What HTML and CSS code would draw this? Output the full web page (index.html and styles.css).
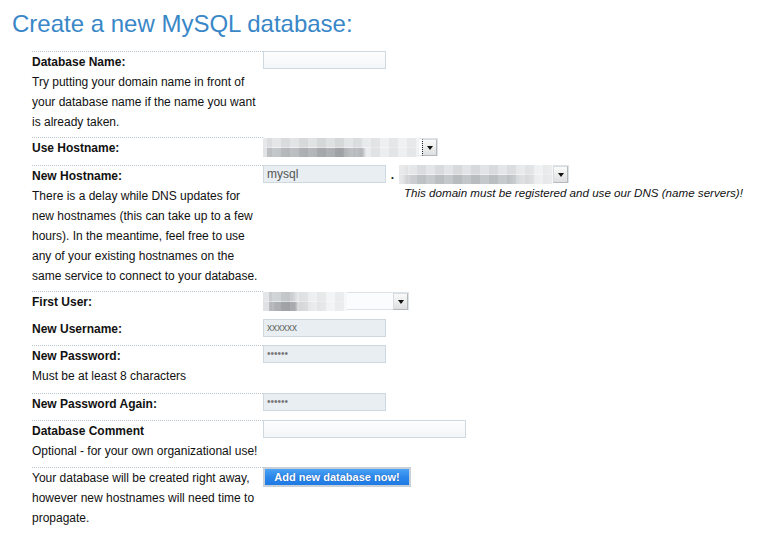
FILE: index.html
```html
<!DOCTYPE html>
<html>
<head>
<meta charset="utf-8">
<link rel="stylesheet" href="styles.css">
</head>
<body>
<h1 class="title">Create a new MySQL database:</h1>
<div class="form">
  <div class="row r-tight">
    <div class="lbl"><b>Database Name:</b><br>Try putting your domain name in front of your database name if the name you want is already taken.</div>
    <div class="fld"><div class="inp w123"></div></div>
  </div>
  <div class="row r-loose">
    <div class="lbl"><b>Use Hostname:</b></div>
    <div class="fld">
      <div class="sel sel-host">
        <div class="mos mos-a"></div>
        <div class="arr focus"><span class="tri"></span></div>
      </div>
    </div>
  </div>
  <div class="row r-tight">
    <div class="lbl"><b>New Hostname:</b><br>There is a delay while DNS updates for new hostnames (this can take up to a few hours). In the meantime, feel free to use any of your existing hostnames on the same service to connect to your database.</div>
    <div class="fld">
      <div class="hostline">
        <div class="inp filled w123">mysql</div>
        <span class="dot">.</span>
        <div class="sel sel-dom">
          <div class="mos mos-b"></div>
          <div class="arr"><span class="tri"></span></div>
        </div>
      </div>
      <div class="note">This domain must be registered and use our DNS (name servers)!</div>
    </div>
  </div>
  <div class="row">
    <div class="lbl"><b>First User:</b></div>
    <div class="fld">
      <div class="sel sel-user">
        <div class="mos mos-c"></div>
        <div class="arr"><span class="tri"></span></div>
      </div>
    </div>
  </div>
  <div class="row nob">
    <div class="lbl"><b>New Username:</b></div>
    <div class="fld"><div class="inp filled w123 small">xxxxxx</div></div>
  </div>
  <div class="row r-loose">
    <div class="lbl"><b>New Password:</b><br>Must be at least 8 characters</div>
    <div class="fld"><div class="inp filled w123 pw">••••••</div></div>
  </div>
  <div class="row">
    <div class="lbl"><b>New Password Again:</b></div>
    <div class="fld"><div class="inp filled w123 pw">••••••</div></div>
  </div>
  <div class="row">
    <div class="lbl"><b>Database Comment</b><br>Optional - for your own organizational use!</div>
    <div class="fld"><div class="inp w203"></div></div>
  </div>
  <div class="row">
    <div class="lbl">Your database will be created right away, however new hostnames will need time to propagate.</div>
    <div class="fld"><div class="btn">Add new database now!</div></div>
  </div>
</div>
</body>
</html>
```
FILE: styles.css
```css
html, body {
  margin: 0;
  padding: 0;
  background: #fff;
}
body {
  padding: 0 12px;
  font-family: "Liberation Sans", Arial, sans-serif;
  font-size: 12px;
  line-height: 20px;
  color: #111;
}
.title {
  margin: 9px 0 12px;
  font-size: 24px;
  line-height: 30px;
  font-weight: normal;
  color: #3a87c8;
}
.form {
  margin-left: 20px;
}
.row {
  display: grid;
  grid-template-columns: 231px 1fr;
}
.lbl {
  border-top: 1px dotted #bcc6ce;
  padding-bottom: 6px;
}
.r-tight .lbl { padding-bottom: 5px; }
.r-loose .lbl { padding-bottom: 7px; }
.nob .lbl { border-top-color: transparent; }
.lbl b { font-weight: bold; }
.fld {
  display: flex;
  flex-direction: column;
  align-items: flex-start;
}
.nob .fld { padding-top: 1px; }
.inp {
  box-sizing: border-box;
  height: 18px;
  border: 1px solid #cdd8e0;
  background: linear-gradient(#fdfdfe, #f3f6f8);
  font-size: 12px;
  line-height: 16px;
  padding-left: 3px;
  color: #555;
}
.w123 { width: 123px; }
.w203 { width: 203px; }
.filled { background: #e8eef1; }
.small { font-size: 10px; color: #666; }
.pw { font-size: 10px; color: #777; letter-spacing: 0; }
.hostline {
  display: flex;
  align-items: flex-start;
}
.dot {
  width: 13px;
  text-align: center;
  line-height: 20px;
  height: 18px;
  font-weight: bold;
  color: #222;
}
.sel {
  box-sizing: border-box;
  height: 18px;
  display: flex;
  border: 1px solid #dde4e9;
  background: #fbfcfd;
}
.sel-host { width: 175px; margin-top: 1px; }
.sel-dom { width: 170px; }
.sel-user { width: 146px; margin-top: 1px; }
.mos {
  flex: none;
  height: 19px;
  margin: -1px 0 0 -1px;
  background:
    repeating-linear-gradient(90deg, rgba(0,0,0,0.04) 0 9px, rgba(255,255,255,0.05) 9px 18px),
    var(--top) top / 100% 50% no-repeat,
    var(--bot) bottom / 100% 50% no-repeat;
}
.mos-a {
  width: 156px;
  --top: linear-gradient(90deg, #f0f1f2 0 4px, #e4e6e7 4px, #dcdfe0 45%, #e3e6e7 60%, #eceeef 75%, #f1f2f3 100%);
  --bot: linear-gradient(90deg, #e9ebec 0 4px, #c5c8ca 4px, #b0b4b6 30%, #a4a8aa 50%, #c4c7c9 60%, #b6babc 64%, #e8eaeb 66%, #eef0f1 100%);
}
.mos-b {
  width: 154px;
  --top: linear-gradient(90deg, #f2f3f4 0 2%, #e3e6e7 8%, #dfe2e3 50%, #e4e7e8 75%, #eef0f1 90%, #f6f7f8 100%);
  --bot: linear-gradient(90deg, #eef0f1 0 2%, #c8cbcd 8%, #bfc3c5 40%, #c3c7c9 70%, #d8dbdc 78%, #e9ebec 88%, #f5f6f7 100%);
}
.mos-c {
  width: 84px;
  --top: linear-gradient(90deg, #eceeef 0 6px, #d2d5d7 6px, #c9cccd 35%, #e6e8e9 42%, #f0f2f3 70%, #f6f7f8 100%);
  --bot: linear-gradient(90deg, #e8eaeb 0 6px, #c4c7c9 6px, #a9adaf 15%, #a3a7a9 38%, #dcdfe0 42%, #eef0f1 70%, #f7f8f9 100%);
}
.arr {
  box-sizing: border-box;
  width: 15px;
  height: 17px;
  margin-left: auto;
  border: 1px solid #b4b8bb;
  border-top-color: #d9dcde;
  border-left-color: #d9dcde;
  background: linear-gradient(#fafafa, #dedfe0);
  display: flex;
  align-items: center;
  justify-content: center;
}
.arr.focus {
  border-left: 1px dotted #222;
}
.tri {
  width: 0;
  height: 0;
  border-left: 3.5px solid transparent;
  border-right: 3.5px solid transparent;
  border-top: 4px solid #111;
  margin-top: 1px;
}
.note {
  margin-left: 141px;
  font-style: italic;
  font-size: 11.6px;
  color: #111;
  line-height: 20px;
}
.btn {
  box-sizing: border-box;
  width: 148px;
  height: 20px;
  border: 2px solid #c7d0d8;
  background: linear-gradient(#4aa3f5, #2b87ea 50%, #1f7be3);
  color: #fff;
  font-weight: bold;
  font-size: 11px;
  line-height: 16px;
  text-align: center;
  text-shadow: 0 0 1px rgba(0, 40, 120, 0.6);
}
```
